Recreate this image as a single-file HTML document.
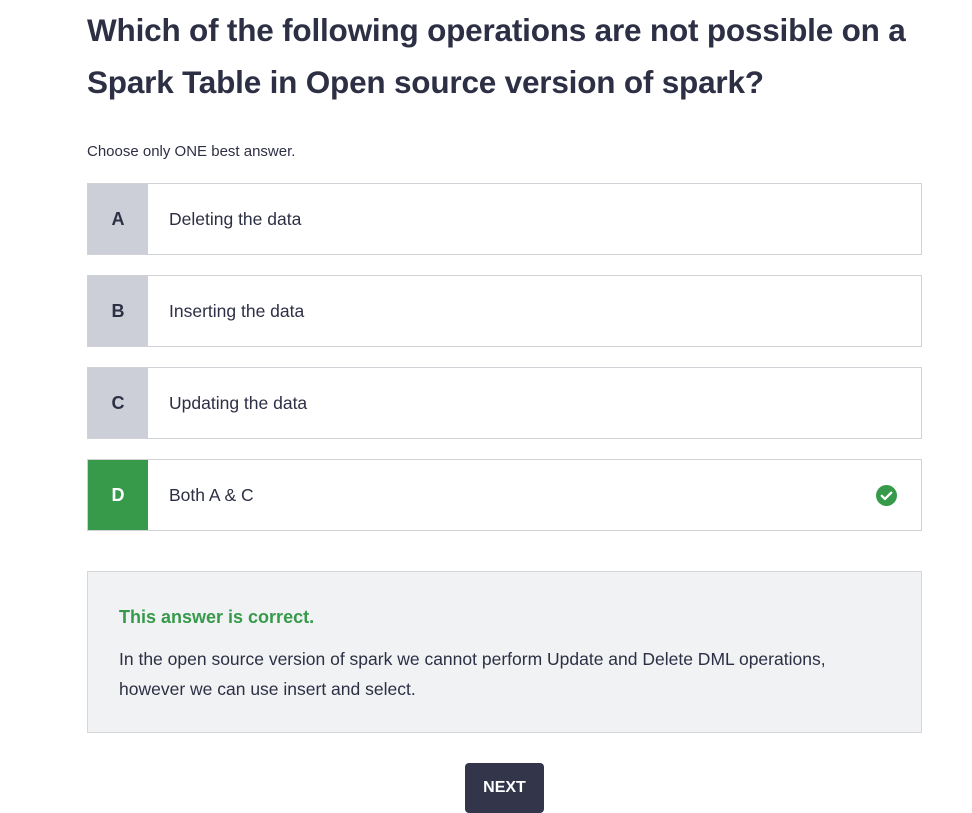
<!DOCTYPE html>
<html><head><meta charset="utf-8"><style>
body{margin:0;background:#fff;font-family:"Liberation Sans",sans-serif;color:#2d2f44;width:972px;height:807px;overflow:hidden;position:relative}
h1{position:absolute;left:87px;top:4px;margin:0;font-size:31.5px;line-height:52px;font-weight:bold;width:860px;letter-spacing:-0.2px}
.sub{position:absolute;left:87px;top:143px;font-size:15px}
.opt{position:absolute;left:87px;width:833px;height:70px;border:1px solid #d1d2d8;background:#fff;display:flex;align-items:center}
.l{width:60px;height:100%;background:#cdcfd8;display:flex;align-items:center;justify-content:center;font-weight:bold;font-size:18px}
.t{margin-left:21px;font-size:17.5px}
.g .l{background:#379a4b;color:#fff}
.fb{position:absolute;left:87px;top:571px;width:833px;height:160px;border:1px solid #d6d7db;background:#f1f2f4}
.fb .h{position:absolute;left:31px;top:35px;color:#379a4b;font-weight:bold;font-size:18px}
.fb .p{position:absolute;left:31px;top:72px;font-size:17.5px;line-height:30px;width:790px;white-space:nowrap}
.btn{position:absolute;left:465px;top:763px;width:79px;height:50px;background:#33364b;border-radius:4px;color:#fff;font-weight:bold;font-size:16px;text-align:center;line-height:50px}
</style></head><body>
<h1>Which of the following operations are not possible on a Spark Table in Open source version of spark?</h1>
<div class="sub">Choose only ONE best answer.</div>
<div class="opt" style="top:183px"><div class="l">A</div><div class="t">Deleting the data</div></div>
<div class="opt" style="top:275px"><div class="l">B</div><div class="t">Inserting the data</div></div>
<div class="opt" style="top:367px"><div class="l">C</div><div class="t">Updating the data</div></div>
<div class="opt g" style="top:459px"><div class="l">D</div><div class="t">Both A &amp; C</div>
<svg style="position:absolute;left:788px;top:25px" width="21" height="21" viewBox="0 0 20 20"><circle cx="10" cy="10" r="10" fill="#379a4b"/><path d="M5.5 10.3l3 3 6-6" stroke="#fff" stroke-width="2.2" fill="none" stroke-linecap="round" stroke-linejoin="round"/></svg></div>
<div class="fb"><div class="h">This answer is correct.</div><div class="p">In the open source version of spark we cannot perform Update and Delete DML operations,<br>however we can use insert and select.</div></div>
<div class="btn">NEXT</div>
</body></html>
